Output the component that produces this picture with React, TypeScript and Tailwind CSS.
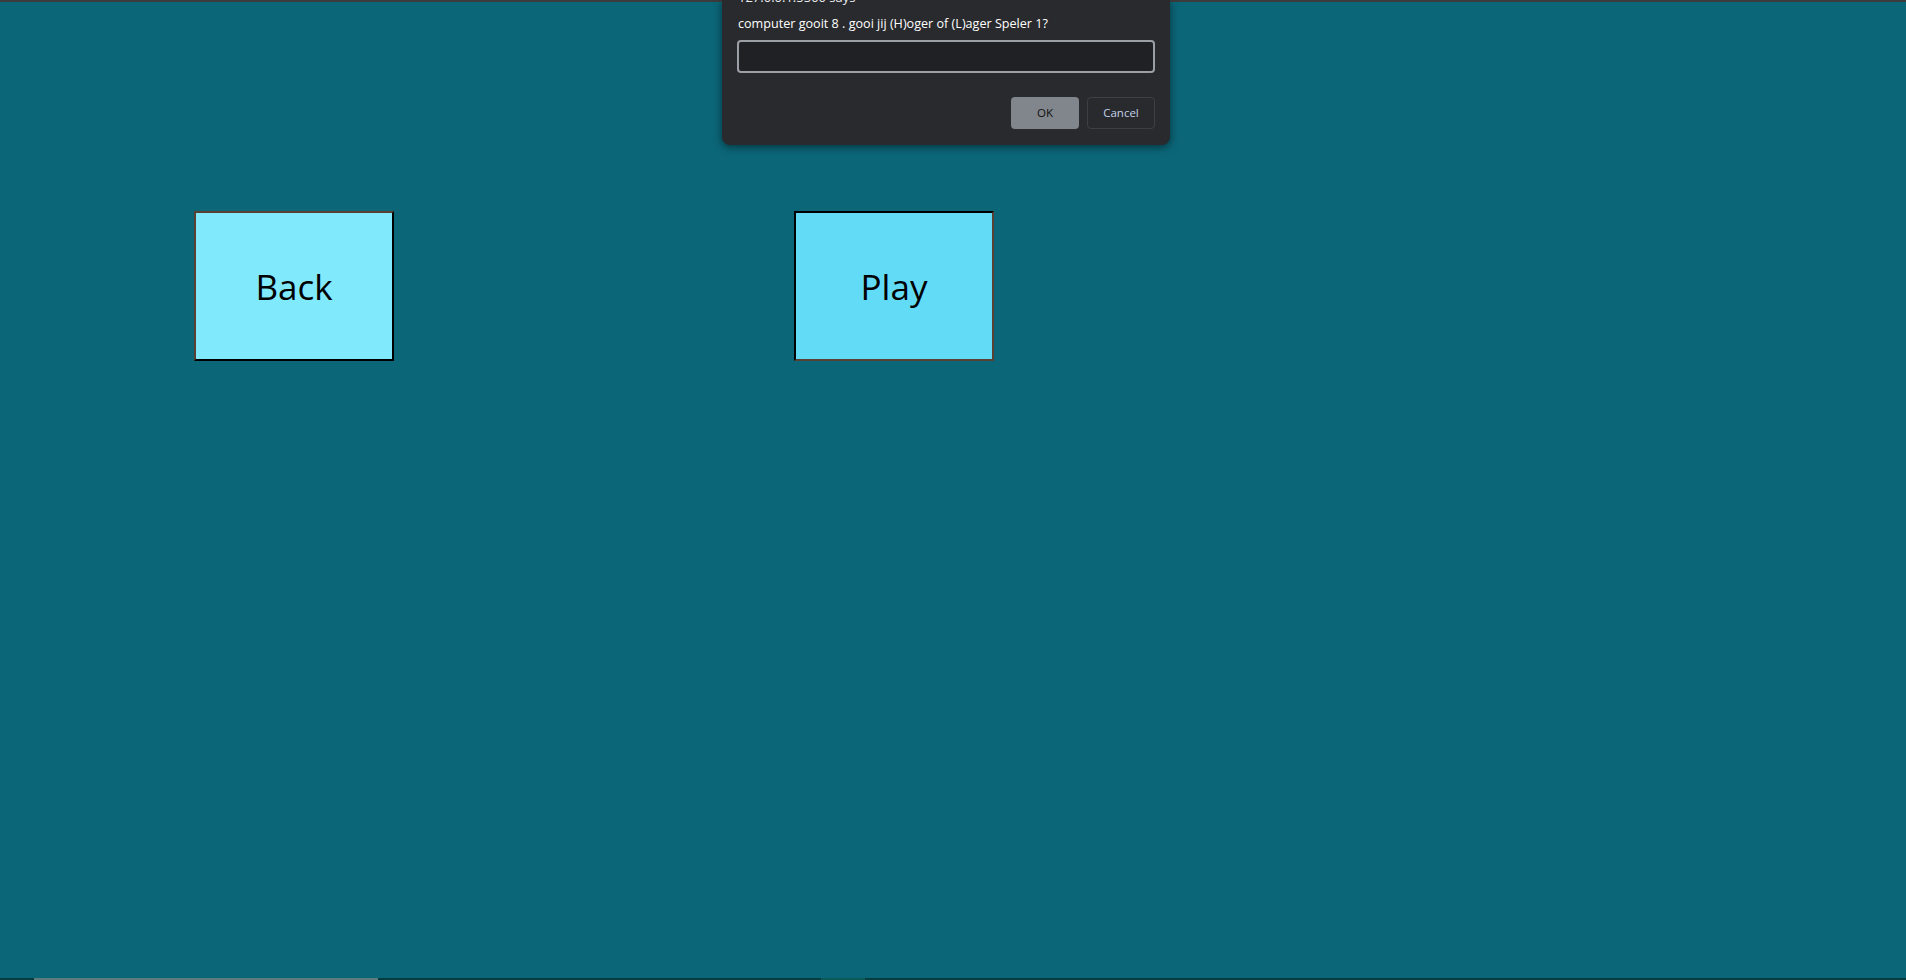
import React from "react";

function GameButton({ label, pressed }: { label: string; pressed?: boolean }) {
  return (
    <button
      className={
        pressed
          ? "w-[200px] h-[150px] pt-[2px] bg-[#62dbf7] border-2 border-t-black border-l-black border-r-[#5a3f35] border-b-[#5a3f35] text-[35px] text-black"
          : "w-[200px] h-[150px] pt-[2px] bg-[#80e9fb] border-2 border-t-[#5a3f35] border-l-[#5a3f35] border-r-black border-b-black text-[35px] text-black"
      }
      style={{ fontFamily: '"Open Sans", "Noto Sans", sans-serif' }}
    >
      {label}
    </button>
  );
}

function PromptDialog() {
  return (
    <div
      className="absolute left-[722px] top-0 w-[448px] h-[145px] bg-[#292a2d] rounded-b-lg shadow-[0_2px_8px_rgba(0,0,0,0.5)] overflow-hidden flex flex-col pr-[15px] pl-[16px] text-[#e8eaed]"
      style={{ fontFamily: '"Open Sans", "Noto Sans", sans-serif' }}
    >
      <div className="-mt-[11px] h-[16px] text-[13px] leading-[16px] text-[#e8eaed]">127.0.0.1:5500 says</div>
      <div className="mt-[11px] text-[12.6px] leading-[16px] text-white">computer gooit 8 . gooi jij (H)oger of (L)ager Speler 1?</div>
      <input className="mt-[8px] -ml-px h-[33px] w-[418px] bg-[#202124] border-2 border-[#9aa0a6] rounded outline-none" />
      <div className="mt-[24px] flex justify-end gap-2">
        <button className="w-[68px] h-[32px] rounded bg-[#80868b] text-[11.5px] text-[#111111]">OK</button>
        <button className="w-[68px] h-[32px] rounded border border-[#3c4043] text-[11.5px] text-[#c2d2ea]">Cancel</button>
      </div>
    </div>
  );
}

export default function App() {
  return (
    <div className="relative h-[980px] w-full overflow-hidden bg-[#0b6678] flex flex-col">
      <div className="h-[2px] bg-[#3c3c3c]" />
      <div className="flex-1 flex flex-col">
        <div className="mt-[209px] ml-[194px] flex gap-[400px]">
          <GameButton label="Back" />
          <GameButton label="Play" pressed />
        </div>
      </div>
      <div className="h-[2px] bg-[#063b40] flex">
        <div className="ml-[34px] w-[344px] bg-[#5c7b7c]" />
        <div className="ml-[443px] w-[44px] bg-[#0d5a5a]" />
      </div>
      <PromptDialog />
    </div>
  );
}
